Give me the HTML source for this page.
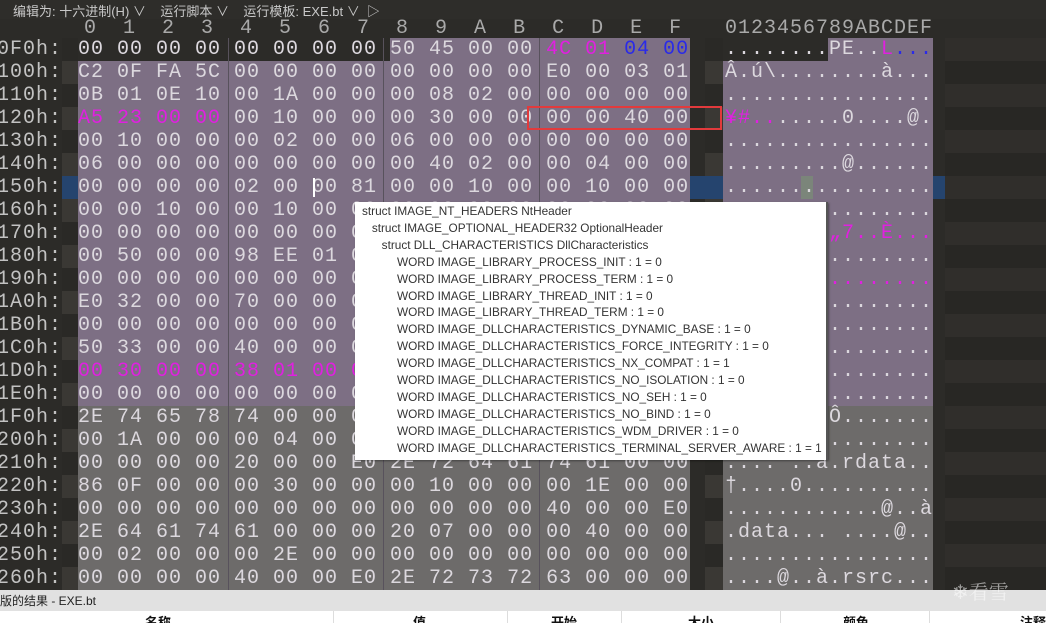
<!DOCTYPE html>
<html><head><meta charset="utf-8"><style>
*{margin:0;padding:0;box-sizing:border-box}
body{width:1046px;height:623px;overflow:hidden;background:#2c2b28;position:relative;font-family:"Liberation Mono",monospace}
.a{position:absolute}
.m{font-family:"Liberation Mono",monospace;font-size:20px;letter-spacing:1px;white-space:pre;line-height:23px;color:#dcd8de}
.lab{color:#c2c2c2}
.mg{color:#e020e0}.bl{color:#2a2ae8}
.tb{font-family:"Liberation Sans","Noto Sans CJK SC",sans-serif;font-size:13px;color:#c8c8c8;top:1px;white-space:pre}
.tt{font-family:"Liberation Sans",sans-serif;font-size:11.8px;color:#333;line-height:16.9px;white-space:pre}
</style></head><body>
<div class="a" style="left:0;top:0;width:1046px;height:19px;background:#2e2d2a"></div>
<div class="a tb" style="left:13px">编辑为: 十六进制(H) ∨    运行脚本 ∨    运行模板: EXE.bt ∨  ▷</div>
<div class="a" style="left:945px;top:38px;width:101px;height:552px;background:repeating-linear-gradient(#302e2b 0 23px,#282724 23px 46px)"></div>
<div class="a" style="left:62px;top:38px;width:16px;height:552px;background:repeating-linear-gradient(#2a2926 0 23px,#3a3834 23px 46px)"></div>
<div class="a" style="left:705px;top:38px;width:18px;height:552px;background:repeating-linear-gradient(#2a2926 0 23px,#3a3834 23px 46px)"></div>
<div class="a" style="left:390px;top:38px;width:300px;height:23px;background:#7d6f84"></div>
<div class="a" style="left:78px;top:61px;width:612px;height:345px;background:#7d6f84"></div>
<div class="a" style="left:78px;top:406px;width:612px;height:184px;background:#6d6b6a"></div>
<div class="a" style="left:828px;top:38px;width:105px;height:23px;background:#7d6f84"></div>
<div class="a" style="left:723px;top:61px;width:210px;height:345px;background:#7d6f84"></div>
<div class="a" style="left:723px;top:406px;width:210px;height:184px;background:#6d6b6a"></div>
<div class="a" style="left:62px;top:176px;width:16px;height:23px;background:#25446e"></div>
<div class="a" style="left:690px;top:176px;width:33px;height:23px;background:#25446e"></div>
<div class="a" style="left:933px;top:176px;width:12px;height:23px;background:#25446e"></div>
<div class="a" style="left:801px;top:176px;width:12px;height:23px;background:#7b857a"></div>
<div class="a" style="left:228px;top:38px;width:1px;height:552px;background:#58525c"></div>
<div class="a" style="left:383px;top:38px;width:1px;height:552px;background:#58525c"></div>
<div class="a" style="left:539px;top:38px;width:1px;height:552px;background:#58525c"></div>
<div class="a m" style="left:84px;top:17px;color:#a9a9a9">0  1  2  3  4  5  6  7  8  9  A  B  C  D  E  F</div>
<div class="a m" style="left:725px;top:17px;color:#a9a9a9">0123456789ABCDEF</div>
<div class="a m lab" style="left:-3px;top:38px">0F0h:
100h:
110h:
120h:
130h:
140h:
150h:
160h:
170h:
180h:
190h:
1A0h:
1B0h:
1C0h:
1D0h:
1E0h:
1F0h:
200h:
210h:
220h:
230h:
240h:
250h:
260h:</div>
<div class="a m" style="left:78px;top:38px">00 00 00 00 00 00 00 00 50 45 00 00 <span class="mg">4C 01</span> <span class="bl">04 00</span>
C2 0F FA 5C 00 00 00 00 00 00 00 00 E0 00 03 01
0B 01 0E 10 00 1A 00 00 00 08 02 00 00 00 00 00
<span class="mg">A5 23 00 00</span> 00 10 00 00 00 30 00 00 00 00 40 00
00 10 00 00 00 02 00 00 06 00 00 00 00 00 00 00
06 00 00 00 00 00 00 00 00 40 02 00 00 04 00 00
00 00 00 00 02 00 00 81 00 00 10 00 00 10 00 00
00 00 10 00 00 10 00 00 00 00 00 00 00 00 00 00
00 00 00 00 00 00 00 00 00 00 00 00 00 00 00 00
00 50 00 00 98 EE 01 00 00 00 00 00 00 00 00 00
00 00 00 00 00 00 00 00 00 00 00 00 00 00 00 00
E0 32 00 00 70 00 00 00 00 00 00 00 00 00 00 00
00 00 00 00 00 00 00 00 00 00 00 00 00 00 00 00
50 33 00 00 40 00 00 00 00 00 00 00 00 00 00 00
<span class="mg">00 30 00 00 38 01 00 00</span> 00 00 00 00 00 00 00 00
00 00 00 00 00 00 00 00 00 00 00 00 00 00 00 00
2E 74 65 78 74 00 00 00 00 00 00 00 00 00 00 00
00 1A 00 00 00 04 00 00 00 00 00 00 00 00 00 00
00 00 00 00 20 00 00 E0 2E 72 64 61 74 61 00 00
86 0F 00 00 00 30 00 00 00 10 00 00 00 1E 00 00
00 00 00 00 00 00 00 00 00 00 00 00 40 00 00 E0
2E 64 61 74 61 00 00 00 20 07 00 00 00 40 00 00
00 02 00 00 00 2E 00 00 00 00 00 00 00 00 00 00
00 00 00 00 40 00 00 E0 2E 72 73 72 63 00 00 00</div>
<div class="a" style="left:313px;top:178px;width:2px;height:19px;background:#fff"></div>
<div class="a m" style="left:725px;top:38px">........PE..<span class="mg">L</span><span class="bl">...</span>
Â.ú\........à...
................
<span class="mg">¥#..</span>.....0....@.
................
.........@......
................
................
........<span class="mg">„7..È...</span>
................
........<span class="mg">........</span>
................
................
................
................
................
.text...Ô.......
................
.... ..à.rdata..
†....0..........
............@..à
.data... ....@..
................
....@..à.rsrc...</div>
<div class="a" style="left:527px;top:106px;width:195px;height:24px;border:2px solid #e23a3c"></div>
<div class="a" style="left:355px;top:202px;width:473px;height:258px;background:#fff;border-right:2px solid #555;box-shadow:1px 1px 2px rgba(0,0,0,.4)"></div>
<div class="a tt" style="left:362px;top:203px">struct IMAGE_NT_HEADERS NtHeader
   struct IMAGE_OPTIONAL_HEADER32 OptionalHeader
      struct DLL_CHARACTERISTICS DllCharacteristics</div>
<div class="a tt" style="left:397px;top:253.7px">WORD IMAGE_LIBRARY_PROCESS_INIT : 1 = 0
WORD IMAGE_LIBRARY_PROCESS_TERM : 1 = 0
WORD IMAGE_LIBRARY_THREAD_INIT : 1 = 0
WORD IMAGE_LIBRARY_THREAD_TERM : 1 = 0
WORD IMAGE_DLLCHARACTERISTICS_DYNAMIC_BASE : 1 = 0
WORD IMAGE_DLLCHARACTERISTICS_FORCE_INTEGRITY : 1 = 0
WORD IMAGE_DLLCHARACTERISTICS_NX_COMPAT : 1 = 1
WORD IMAGE_DLLCHARACTERISTICS_NO_ISOLATION : 1 = 0
WORD IMAGE_DLLCHARACTERISTICS_NO_SEH : 1 = 0
WORD IMAGE_DLLCHARACTERISTICS_NO_BIND : 1 = 0
WORD IMAGE_DLLCHARACTERISTICS_WDM_DRIVER : 1 = 0
WORD IMAGE_DLLCHARACTERISTICS_TERMINAL_SERVER_AWARE : 1 = 1</div>
<div class="a" style="left:0;top:590px;width:1046px;height:21px;background:#e1e1e1"></div>
<div class="a" style="left:0;top:592px;font-family:'Liberation Sans','Noto Sans CJK SC',sans-serif;font-size:12px;color:#222;white-space:pre">版的结果 - EXE.bt</div>
<div class="a" style="left:0;top:611px;width:1046px;height:12px;background:#fff"></div>
<div class="a" style="left:0;top:611px;width:1046px;height:12px;overflow:hidden;font-family:'Liberation Sans','Noto Sans CJK SC',sans-serif;font-size:13px;font-weight:bold;color:#111">
<span class="a" style="left:145px;top:1px">名称</span><span class="a" style="left:413px;top:1px">值</span><span class="a" style="left:551px;top:1px">开始</span><span class="a" style="left:688px;top:1px">大小</span><span class="a" style="left:843px;top:1px">颜色</span><span class="a" style="left:1020px;top:1px">注释</span>
<span class="a" style="left:333px;top:0;width:1px;height:12px;background:#ddd"></span><span class="a" style="left:507px;top:0;width:1px;height:12px;background:#ddd"></span><span class="a" style="left:621px;top:0;width:1px;height:12px;background:#ddd"></span><span class="a" style="left:780px;top:0;width:1px;height:12px;background:#ddd"></span><span class="a" style="left:929px;top:0;width:1px;height:12px;background:#ddd"></span></div>
<div class="a" style="left:952px;top:576px;font-family:'Noto Serif CJK SC',serif;font-size:20px;color:rgba(255,255,255,.55);white-space:pre">❄看雪</div>
</body></html>
